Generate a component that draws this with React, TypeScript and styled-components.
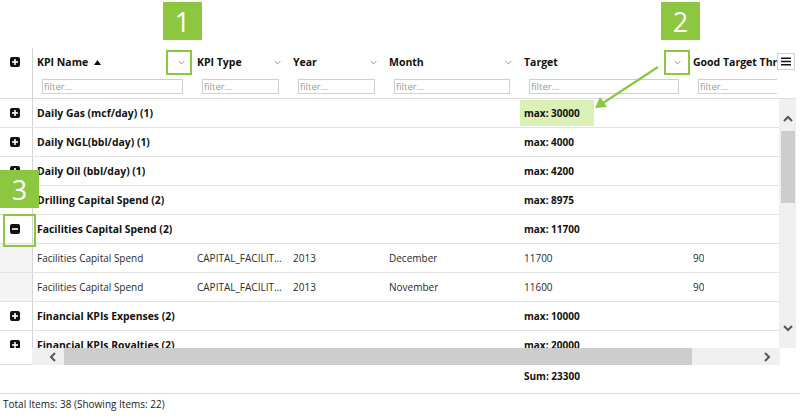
import React from "react";
import styled, { createGlobalStyle } from "styled-components";

const FONT = `"Open Sans", "Noto Sans", Arial, sans-serif`;
const GREEN = "#8dc63f";

const GlobalStyle = createGlobalStyle`
  html, body { margin: 0; padding: 0; background: #fff; }
  body { font-family: ${FONT}; font-size: 10px; color: #111; }
  * { box-sizing: border-box; }
`;

type Col = { key: string; title: string; width: number; sort?: boolean };
const columns: Col[] = [
  { key: "name", title: "KPI Name", width: 160, sort: true },
  { key: "type", title: "KPI Type", width: 96 },
  { key: "year", title: "Year", width: 96 },
  { key: "month", title: "Month", width: 135 },
  { key: "target", title: "Target", width: 169 },
  { key: "good", title: "Good Target Threshold", width: 140 },
];

type Row =
  | { kind: "group"; name: string; target: string; open?: boolean; hl?: boolean }
  | { kind: "detail"; cells: string[] };

const rows: Row[] = [
  { kind: "group", name: "Daily Gas (mcf/day) (1)", target: "max: 30000", hl: true },
  { kind: "group", name: "Daily NGL(bbl/day) (1)", target: "max: 4000" },
  { kind: "group", name: "Daily Oil (bbl/day) (1)", target: "max: 4200" },
  { kind: "group", name: "Drilling Capital Spend (2)", target: "max: 8975" },
  { kind: "group", name: "Facilities Capital Spend (2)", target: "max: 11700", open: true },
  { kind: "detail", cells: ["Facilities Capital Spend", "CAPITAL_FACILITIES", "2013", "December", "11700", "90"] },
  { kind: "detail", cells: ["Facilities Capital Spend", "CAPITAL_FACILITIES", "2013", "November", "11600", "90"] },
  { kind: "group", name: "Financial KPIs Expenses (2)", target: "max: 10000" },
  { kind: "group", name: "Financial KPIs Royalties (2)", target: "max: 20000" },
];

const Page = styled.div`
  position: relative;
  width: 800px;
  height: 419px;
  overflow: hidden;
  padding-top: 48px;
`;

const Grid = styled.div`
  width: 800px;
  display: flex;
  flex-direction: column;
`;

const HeaderRow = styled.div`
  display: flex;
  height: 51px;
  border-bottom: 1px solid #dcdcdc;
  width: 796px;
`;

const IndicatorCell = styled.div<{ $shade?: boolean; $h?: number }>`
  width: 33px;
  flex: 0 0 33px;
  border-right: 1px solid #d4d4d4;
  display: flex;
  justify-content: center;
  align-items: ${(p) => (p.$h ? "flex-start" : "center")};
  padding-top: ${(p) => (p.$h ? "9px" : "0")};
  padding-right: 3px;
  background: ${(p) => (p.$shade ? "#f4f4f4" : "transparent")};
`;

const ColumnsViewport = styled.div<{ $w: number }>`
  width: ${(p) => p.$w}px;
  flex: 0 0 ${(p) => p.$w}px;
  overflow: hidden;
  display: flex;
`;

const HeaderCell = styled.div<{ $w: number }>`
  flex: 0 0 ${(p) => p.$w}px;
  width: ${(p) => p.$w}px;
  display: flex;
  flex-direction: column;
`;

const HeaderTitle = styled.div`
  height: 28px;
  display: flex;
  align-items: center;
  padding: 0 8px 0 4px;
  font-weight: 700;
  font-size: 10.5px;
  color: #111;
  white-space: nowrap;
`;

const TitleText = styled.span`
  flex: 1;
  display: flex;
  align-items: center;
  gap: 6px;
  overflow: hidden;
`;

const FilterInput = styled.input`
  margin: 3px 10px 0 9px;
  height: 15px;
  border: 1px solid #cfcfcf;
  padding: 0 1px;
  font-family: ${FONT};
  font-size: 9.5px;
  color: #333;
  outline: none;
  &::placeholder { color: #9a9a9a; }
`;

const MenuButton = styled.div`
  margin-top: 5px;
  width: 18px;
  height: 17px;
  border: 1px solid #d0d0d0;
  display: flex;
  align-items: center;
  justify-content: center;
  background: #fff;
`;

const BodyArea = styled.div`
  display: flex;
  height: 249px;
  width: 796px;
`;

const RowsViewport = styled.div`
  width: 779px;
  height: 249px;
  overflow: hidden;
`;

const BodyRow = styled.div`
  display: flex;
  height: 29px;
  border-bottom: 1px solid #e3e3e3;
`;

const Cell = styled.div<{ $w: number; $bold?: boolean; $big?: boolean }>`
  flex: 0 0 ${(p) => p.$w}px;
  width: ${(p) => p.$w}px;
  display: flex;
  align-items: center;
  padding: 0 5px 0 4px;
  font-size: ${(p) => (p.$big ? "10.4px" : "10px")};
  font-weight: ${(p) => (p.$bold ? 700 : 400)};
  color: ${(p) => (p.$bold ? "#111" : "#2a2a2a")};
  white-space: nowrap;
  overflow: hidden;
`;

const CellText = styled.span`
  overflow: hidden;
  text-overflow: ellipsis;
  white-space: nowrap;
`;

const Highlight = styled.span`
  display: flex;
  align-items: center;
  width: 75px;
  height: 26px;
  margin-left: -5px;
  padding-left: 5px;
  background: #daf0b6;
`;

const VScroll = styled.div`
  width: 17px;
  height: 249px;
  background: #f0f0f0;
  display: flex;
  flex-direction: column;
  align-items: center;
`;

const VArrow = styled.div<{ $pt: number; $pb: number }>`
  height: 32px;
  width: 17px;
  display: flex;
  align-items: center;
  justify-content: center;
  padding-top: ${(p) => p.$pt}px;
  padding-bottom: ${(p) => p.$pb}px;
`;

const VThumb = styled.div`
  width: 14px;
  height: 72px;
  background: #cdcdcd;
`;

const VTrack = styled.div`
  flex: 1;
`;

const HScrollRow = styled.div`
  display: flex;
  height: 17px;
  width: 780px;
`;

const HCorner = styled.div`
  width: 32px;
  flex: 0 0 32px;
  border-bottom: 1px solid #dcdcdc;
`;

const HScroll = styled.div`
  flex: 1;
  display: flex;
  background: #f0f0f0;
`;

const HArrow = styled.div<{ $w: number; $pl: number }>`
  flex: 0 0 ${(p) => p.$w}px;
  display: flex;
  align-items: center;
  justify-content: flex-start;
  padding-left: ${(p) => p.$pl}px;
`;

const HThumb = styled.div`
  flex: 0 0 628px;
  background: #cdcdcd;
`;

const HRest = styled.div`
  flex: 1;
`;

const AggRow = styled.div`
  display: flex;
  height: 29px;
  border-bottom: 1px solid #dcdcdc;
  padding-left: 33px;
`;

const AggCell = styled.div<{ $w: number }>`
  flex: 0 0 ${(p) => p.$w}px;
  padding: 4px 5px 0 4px;
  font-weight: 700;
  font-size: 10px;
  line-height: 15px;
  color: #111;
`;

const Status = styled.div`
  height: 20px;
  display: flex;
  align-items: center;
  padding-left: 3px;
  font-size: 10px;
  color: #222;
`;

const Callout = styled.div<{ $x: number; $y: number }>`
  position: absolute;
  left: ${(p) => p.$x}px;
  top: ${(p) => p.$y}px;
  width: 39px;
  height: 38px;
  background: ${GREEN};
  color: #fff;
  font-family: ${FONT};
  font-size: 27px;
  display: flex;
  align-items: center;
  justify-content: center;
`;

const Ring = styled.div<{ $x: number; $y: number; $w: number; $h: number }>`
  position: absolute;
  left: ${(p) => p.$x}px;
  top: ${(p) => p.$y}px;
  width: ${(p) => p.$w}px;
  height: ${(p) => p.$h}px;
  border: 2px solid ${GREEN};
`;

const ArrowLayer = styled.svg`
  position: absolute;
  left: 0;
  top: 0;
  pointer-events: none;
`;

const ToggleIcon = ({ open }: { open?: boolean }) => (
  <svg width="10" height="10" viewBox="0 0 10 10">
    <rect x="0" y="0" width="10" height="10" rx="2" fill="#111" />
    <rect x="2" y="4.2" width="6" height="1.6" fill="#fff" />
    {!open && <rect x="4.2" y="2" width="1.6" height="6" fill="#fff" />}
  </svg>
);

const Chevron = ({ dir, color = "#666", size = 7, sw = 1 }: { dir: "down" | "up" | "left" | "right"; color?: string; size?: number; sw?: number }) => {
  const pts: Record<string, string> = {
    down: "1,3 5,7 9,3",
    up: "1,7 5,3 9,7",
    left: "7,1 3,5 7,9",
    right: "3,1 7,5 3,9",
  };
  return (
    <svg width={size} height={size} viewBox="0 0 10 10">
      <polyline points={pts[dir]} fill="none" stroke={color} strokeWidth={sw} />
    </svg>
  );
};

const SortUp = () => (
  <svg width="7" height="5" viewBox="0 0 7 5">
    <polygon points="0,5 3.5,0 7,5" fill="#111" />
  </svg>
);

const MenuIcon = () => (
  <svg width="10" height="9" viewBox="0 0 10 9">
    <rect x="0" y="0.5" width="10" height="1.5" fill="#111" />
    <rect x="0" y="3.75" width="10" height="1.5" fill="#111" />
    <rect x="0" y="7" width="10" height="1.5" fill="#111" />
  </svg>
);

export default function App() {
  return (
    <>
      <GlobalStyle />
      <Page>
        <Grid>
          <HeaderRow>
            <IndicatorCell $h={1}>
              <ToggleIcon />
            </IndicatorCell>
            <ColumnsViewport $w={744}>
              {columns.map((c) => (
                <HeaderCell key={c.key} $w={c.width}>
                  <HeaderTitle>
                    <TitleText>
                      {c.title}
                      {c.sort && <SortUp />}
                    </TitleText>
                    <Chevron dir="down" />
                  </HeaderTitle>
                  <FilterInput placeholder="filter..." readOnly />
                </HeaderCell>
              ))}
            </ColumnsViewport>
            <MenuButton>
              <MenuIcon />
            </MenuButton>
          </HeaderRow>

          <BodyArea>
            <RowsViewport>
              {rows.map((r, i) =>
                r.kind === "group" ? (
                  <BodyRow key={i}>
                    <IndicatorCell>
                      <ToggleIcon open={r.open} />
                    </IndicatorCell>
                    <Cell $w={160} $bold $big>
                      <CellText>{r.name}</CellText>
                    </Cell>
                    <Cell $w={96} />
                    <Cell $w={96} />
                    <Cell $w={135} />
                    <Cell $w={169} $bold>
                      {r.hl ? <Highlight>{r.target}</Highlight> : <CellText>{r.target}</CellText>}
                    </Cell>
                    <Cell $w={140} />
                  </BodyRow>
                ) : (
                  <BodyRow key={i}>
                    <IndicatorCell $shade />
                    {r.cells.map((t, j) => (
                      <Cell key={j} $w={columns[j].width}>
                        <CellText>{t}</CellText>
                      </Cell>
                    ))}
                  </BodyRow>
                )
              )}
            </RowsViewport>
            <VScroll>
              <VArrow $pt={8} $pb={0}>
                <Chevron dir="up" color="#555" size={10} sw={2} />
              </VArrow>
              <VThumb />
              <VTrack />
              <VArrow $pt={0} $pb={8}>
                <Chevron dir="down" color="#555" size={10} sw={2} />
              </VArrow>
            </VScroll>
          </BodyArea>

          <HScrollRow>
            <HCorner />
            <HScroll>
              <HArrow $w={32} $pl={16}>
                <Chevron dir="left" color="#555" size={10} sw={2} />
              </HArrow>
              <HThumb />
              <HRest />
              <HArrow $w={40} $pl={22}>
                <Chevron dir="right" color="#555" size={10} sw={2} />
              </HArrow>
            </HScroll>
          </HScrollRow>

          <AggRow>
            <AggCell $w={160} />
            <AggCell $w={96} />
            <AggCell $w={96} />
            <AggCell $w={135} />
            <AggCell $w={169}>Sum: 23300</AggCell>
          </AggRow>

          <Status>Total Items: 38 (Showing Items: 22)</Status>
        </Grid>

        <Callout $x={163} $y={2}>1</Callout>
        <Callout $x={661} $y={2}>2</Callout>
        <Callout $x={0} $y={170}>3</Callout>
        <Ring $x={166} $y={50} $w={26} $h={25} />
        <Ring $x={664} $y={50} $w={26} $h={25} />
        <Ring $x={3} $y={214} $w={33} $h={33} />
        <ArrowLayer width="800" height="419">
          <line x1="658" y1="67" x2="603" y2="103" stroke={GREEN} strokeWidth="2.2" />
          <polygon points="595,108 600,97 607,107" fill={GREEN} />
        </ArrowLayer>
      </Page>
    </>
  );
}
